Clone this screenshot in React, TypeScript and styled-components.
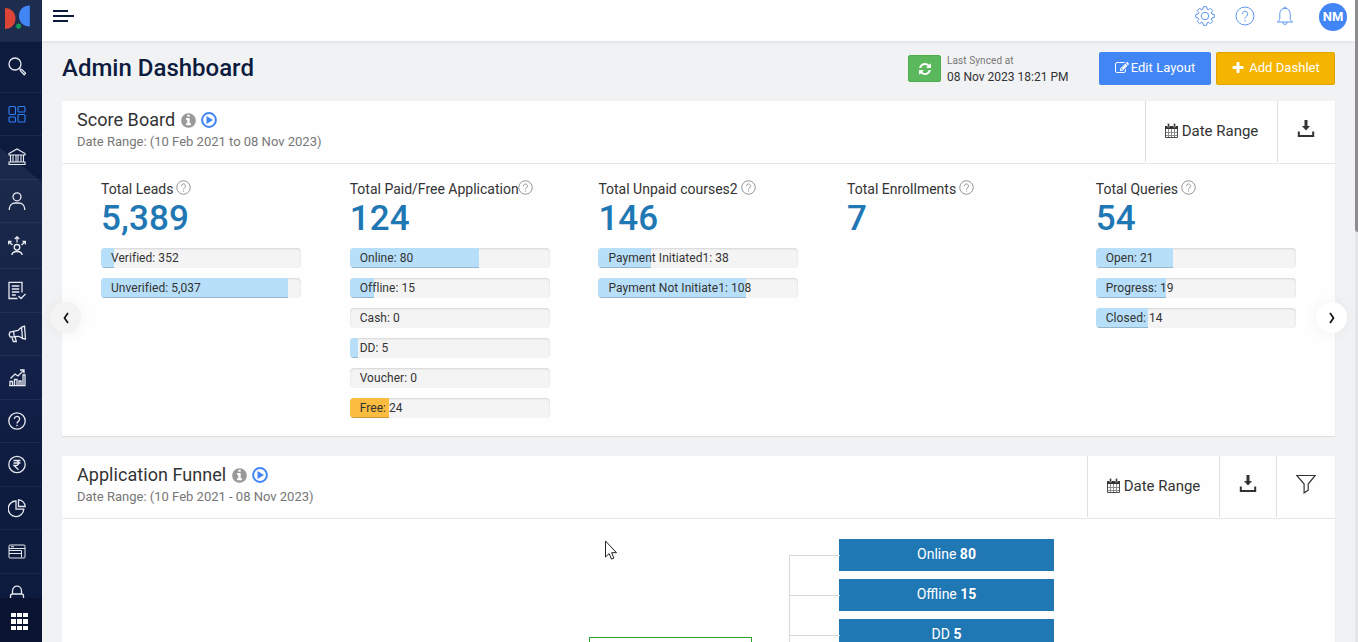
import React from 'react';
import styled, {createGlobalStyle, css} from 'styled-components';

const NAVY = '#0d1b3e';
const BLUE = '#4285f4';
const STEEL = '#1f77b4';
const PAPER = '#f1f2f4';
const INK = '#333';
const LINE = '#e7e7e9';

const GlobalStyle = createGlobalStyle`
  * {
    box-sizing: border-box;
  }

  html,
  body {
    margin: 0;
    overflow: hidden;
    font-family: Roboto, 'Liberation Sans', sans-serif;
    color: ${INK};
    background: ${PAPER};
  }
`;

const Page = styled.div`
  display: flex;
  width: 100%;
  height: 642px;
  overflow: hidden;
`;

const Sidebar = styled.nav`
  display: flex;
  flex-direction: column;
  flex: none;
  width: 42px;
  background:
    linear-gradient(to top right, #1b294a 50%, transparent 51%) 0 148px / 42px 35px no-repeat,
    linear-gradient(#1b294a, #122048 70%, ${NAVY}) 0 183px / 42px 300px no-repeat,
    ${NAVY};
`;

const Logo = styled.div`
  display: flex;
  flex: none;
  align-items: center;
  justify-content: center;
  height: 41px;
  padding: 0 7px 7px 0;
  background: #1e2c4e;
`;

const NavList = styled.div`
  flex: 1;
  min-height: 0;
  overflow: hidden;
`;

const NavItem = styled.div<{$height: number; $active?: boolean}>`
  display: flex;
  align-items: center;
  justify-content: center;
  height: ${(props) => props.$height}px;
  padding-right: 8px;
  color: ${(props) => (props.$active ? '#2f80f5' : '#e8eaf0')};
  border-top: 1px solid rgba(255, 255, 255, 0.06);

  svg {
    display: block;
    fill: none;
    stroke: currentColor;
    stroke-width: 1.3;
  }

  &:first-child {
    padding-bottom: 2px;
  }
`;

const AppsButton = styled.div`
  display: flex;
  flex: none;
  align-items: center;
  justify-content: center;
  height: 44px;
  padding: 3px 3px 0 0;
  background: #0a1430;
`;

const Main = styled.main`
  display: flex;
  flex-direction: column;
  flex: 1;
  min-width: 0;
`;

const TopBar = styled.header`
  display: flex;
  flex: none;
  align-items: center;
  justify-content: space-between;
  height: 41px;
  padding: 0 8px 9px 11px;
  background: #fff;
  box-shadow: 0 1px 4px rgba(0, 0, 0, 0.09);
`;

const TopIcons = styled.div`
  display: flex;
  align-items: center;
  gap: 20px;

  svg {
    display: block;
    fill: none;
    stroke: #5e96f0;
  }
`;

const Avatar = styled.div`
  width: 28px;
  height: 28px;
  margin: 2px 0 0 4px;
  border-radius: 50%;
  color: #fff;
  background: ${BLUE};
  font-size: 13px;
  font-weight: 700;
  line-height: 28px;
  text-align: center;
`;

const Content = styled.div`
  flex: 1;
  min-height: 0;
  padding: 0 20px;
`;

const TitleBar = styled.div`
  display: flex;
  align-items: center;
  height: 60px;
  padding-bottom: 5px;
`;

const PageTitle = styled.h1`
  flex: 1;
  margin: 0 0 2px;
  color: ${NAVY};
  font-size: 24px;
  font-weight: 500;
  line-height: 30px;
`;

const SyncButton = styled.div`
  display: flex;
  align-items: center;
  justify-content: center;
  width: 33px;
  height: 27px;
  border: 1px solid #4cae4c;
  border-radius: 2px;
  color: #fff;
  background: #5cb85c;
`;

const SyncInfo = styled.div`
  width: 158px;
  padding-left: 6px;
  font-size: 12px;
  line-height: 16px;
  white-space: nowrap;

  small {
    display: block;
    color: #777;
    font-size: 10px;
    letter-spacing: 0.1px;
  }
`;

const ActionButton = styled.div<{$tone: 'blue' | 'amber'}>`
  display: flex;
  align-items: center;
  justify-content: center;
  height: 33px;
  padding-bottom: 2px;
  border-radius: 2px;
  color: #fff;
  font-size: 13px;
  letter-spacing: 0.05px;
  white-space: nowrap;

  ${(props) =>
    props.$tone === 'blue'
      ? css`
          gap: 2px;
          width: 112px;
          background: ${BLUE};
        `
      : css`
          gap: 4px;
          width: 119px;
          margin-left: 5px;
          border: 1px solid #e0a300;
          background: #f5b400;
        `};
`;

const Panel = styled.section<{$height: number}>`
  position: relative;
  height: ${(props) => props.$height}px;
  margin-bottom: 20px;
  background: #fefefe;
  box-shadow: 0 1px 1px rgba(0, 0, 0, 0.07);
`;

const PanelHeader = styled.div`
  display: flex;
  height: 63px;
  border-bottom: 1px solid ${LINE};
`;

const PanelHeading = styled.div`
  flex: 1;
  padding: 8px 0 0 15px;
`;

const PanelTitle = styled.h2`
  display: flex;
  align-items: center;
  gap: 5px;
  margin: 0;
  font-size: 18px;
  font-weight: 400;
  line-height: 22px;
  letter-spacing: 0.05px;
`;

const TitleIcons = styled.span`
  display: flex;
  align-items: center;
  gap: 4px;
  color: #999;
`;

const PanelDates = styled.div`
  color: #777;
  font-size: 13px;
  line-height: 22px;
`;

const PanelTool = styled.div<{$width: number; $iconOnly?: boolean}>`
  display: flex;
  align-items: center;
  justify-content: center;
  gap: 3px;
  width: ${(props) => props.$width}px;
  height: 61px;
  padding: ${(props) => (props.$iconOnly ? '0 1px 5px 0' : '0 1px 2px 0')};
  border-left: 1px solid #dfdfe1;
  font-size: 15px;
  white-space: nowrap;
`;

const Scores = styled.div`
  display: grid;
  grid-template-columns: repeat(5, 248.7px);
  padding: 16px 0 0 39px;
`;

const Score = styled.div`
  width: 200px;
`;

const ScoreLabel = styled.div<{$tight?: boolean}>`
  display: flex;
  align-items: center;
  height: 18px;
  font-size: 14px;
  white-space: nowrap;

  svg {
    margin: 0 0 3px ${(props) => (props.$tight ? -1 : 3)}px;
  }
`;

const ScoreTotal = styled.div`
  margin-bottom: 8px;
  color: ${STEEL};
  font-size: 35px;
  font-weight: 500;
  line-height: 42px;
  letter-spacing: 0.1px;
`;

const Track = styled.div`
  position: relative;
  height: 20px;
  margin-bottom: 10px;
  overflow: hidden;
  border-radius: 4px;
  background: #f4f4f4;
  box-shadow: inset 0 1px 2px rgba(0, 0, 0, 0.13);
`;

const Fill = styled.div<{$free?: boolean}>`
  height: 20px;
  background: ${(props) => (props.$free ? '#fbbc3f' : '#b8dff9')};
  box-shadow: inset 0 -1px 0 rgba(0, 0, 0, 0.18);
`;

const TrackText = styled.span`
  position: absolute;
  top: 0;
  left: 10px;
  font-size: 12px;
  line-height: 20px;
  letter-spacing: 0.05px;
  white-space: nowrap;
`;

const Arrow = styled.div<{$side: 'left' | 'right'}>`
  position: absolute;
  top: 201px;
  ${(props) => (props.$side === 'left' ? 'left: -12px' : 'right: -12px')};
  display: flex;
  align-items: center;
  justify-content: center;
  width: 31px;
  height: 31px;
  border-radius: 50%;
  background: ${(props) => (props.$side === 'left' ? '#f3f3f3' : '#fff')};
  box-shadow: 0 0 16px rgba(0, 0, 0, 0.05);
`;

const Canvas = styled.div`
  position: relative;
  height: 125px;
  overflow: hidden;
`;

const FunnelRoot = styled.div`
  position: absolute;
  top: 118px;
  left: 527px;
  width: 163px;
  height: 30px;
  border: 1px solid #2ca02c;
  background: #fff;
`;

const Branches = styled.div`
  position: absolute;
  top: 20px;
  left: 727px;
  width: 265px;
`;

const Branch = styled.div`
  position: relative;
  display: flex;
  align-items: center;
  height: 40px;

  &::before {
    content: '';
    position: absolute;
    top: 16px;
    left: 0;
    width: 50px;
    height: 40px;
    border-top: 1px solid #d8d8d8;
    border-left: 1px solid #d8d8d8;
  }
`;

const BranchBox = styled.div`
  width: 215px;
  height: 32px;
  margin: 0 0 8px 50px;
  color: #fff;
  background: ${STEEL};
  font-size: 14px;
  line-height: 30px;
  text-align: center;
`;

const Scrollbar = styled.div`
  flex: none;
  width: 3px;
  background: #e4e5e7;

  &::before {
    content: '';
    display: block;
    height: 232px;
    border-radius: 0 0 0 3px;
    background: #8d8d8f;
  }
`;

const Pointer = styled.svg`
  position: absolute;
  top: 21px;
  left: 542px;
`;

const Glyph = ({d, size}: {d: string; size: number}): React.JSX.Element => (
  <svg width={size} height={size} viewBox="0 0 1792 1792" fill="currentColor">
    <path d={d} />
  </svg>
);

const REFRESH =
  'M1639 1056q0 5-1 7-64 268-268 434.5t-478 166.5q-146 0-282.5-55t-243.5-157l-129 129q-19 19-45 19t-45-19-19-45v-448q0-26 19-45t45-19h448q26 0 45 19t19 45-19 45l-137 137q71 66 161 102t187 36q134 0 250-65t186-179q11-17 53-117 8-23 30-23h192q13 0 22.5 9.5t9.5 22.5zm25-800v448q0 26-19 45t-45 19h-448q-26 0-45-19t-19-45 19-45l138-138q-148-137-349-137-134 0-250 65t-186 179q-11 17-53 117-8 23-30 23h-199q-13 0-22.5-9.5t-9.5-22.5v-7q65-268 270-434.5t480-166.5q146 0 284 55.5t245 156.5l130-129q19-19 45-19t45 19 19 45z';
const INFO =
  'M1152 1376v-160q0-14-9-23t-23-9h-96v-512q0-14-9-23t-23-9h-320q-14 0-23 9t-9 23v160q0 14 9 23t23 9h96v320h-96q-14 0-23 9t-9 23v160q0 14 9 23t23 9h448q14 0 23-9t9-23zm-128-896v-160q0-14-9-23t-23-9h-192q-14 0-23 9t-9 23v160q0 14 9 23t23 9h192q14 0 23-9t9-23zm640 416q0 209-103 385.5t-279.5 279.5-385.5 103-385.5-103-279.5-279.5-103-385.5 103-385.5 279.5-279.5 385.5-103 385.5 103 279.5 279.5 103 385.5z';
const PLUS =
  'M1600 736v192q0 40-28 68t-68 28h-416v416q0 40-28 68t-68 28h-192q-40 0-68-28t-28-68v-416h-416q-40 0-68-28t-28-68v-192q0-40 28-68t68-28h416v-416q0-40 28-68t68-28h192q40 0 68 28t28 68v416h416q40 0 68 28t28 68z';
const EDIT =
  'M888 1184l116-116-152-152-116 116v56h96v96h56zm440-720q-16-16-33 1l-350 350q-17 17-1 33t33-1l350-350q17-17 1-33zm80 594v190q0 119-84.5 203.5t-203.5 84.5h-832q-119 0-203.5-84.5t-84.5-203.5v-832q0-119 84.5-203.5t203.5-84.5h832q63 0 117 25 15 7 18 23 3 17-9 29l-49 49q-14 14-32 8-23-6-45-6h-832q-66 0-113 47t-47 113v832q0 66 47 113t113 47h832q66 0 113-47t47-113v-126q0-13 9-22l64-64q15-15 35-7t20 29zm-96-738l288 288-672 672h-288v-288zm444 132l-92 92-288-288 92-92q28-28 68-28t68 28l152 152q28 28 28 68t-28 68z';

const HelpIcon = ({size, stroke}: {size: number; stroke?: string}): React.JSX.Element => (
  <svg width={size} height={size} viewBox="0 0 20 20" fill="none" stroke={stroke}>
    <circle cx="10" cy="10" r="9" />
    <path d="M7.3 8a2.7 2.7 0 1 1 4.4 2.1c-1 .8-1.7 1.3-1.7 2.6M10 14.2v1.3" />
  </svg>
);

const PlayIcon = (): React.JSX.Element => (
  <svg width="16" height="16" viewBox="0 0 16 16">
    <circle cx="8" cy="8" r="6.9" fill="none" stroke={BLUE} strokeWidth="2" />
    <path d="M5.5 4v8L12 8z" fill={BLUE} />
  </svg>
);

const CalendarIcon = (): React.JSX.Element => (
  <svg width="15" height="16" viewBox="0 0 15 16">
    <path d="M4.500 6v9M7.500 6v9M10.500 6v9M1 9.500h13M1 12.500h13" fill="none" stroke="#8c8c8c" />
    <path d="M1.500 5v9.500h12V5" fill="none" stroke="#4a4a4a" />
    <path d="M1 3h13v3H1z" fill={INK} />
    <path d="M3.500.500h2v3.500h-2zM9.500.500h2v3.500h-2z" fill={INK} stroke="#fefefe" strokeWidth=".4" />
  </svg>
);

const DownloadIcon = (): React.JSX.Element => (
  <svg width="18" height="18" viewBox="0 0 18 18" fill={INK}>
    <path d="M7.500 0h3v6h2.500L9 10.500 5 6h2.500z" />
    <path d="M1.800 11.500V16h14.400v-4.500" fill="none" stroke={INK} strokeWidth="2" />
  </svg>
);

const FilterIcon = (): React.JSX.Element => (
  <svg width="20" height="20" viewBox="0 0 20 20" fill="none" stroke={INK} strokeWidth="1.200">
    <path d="M.8 1.500h18.400l-7 8.500v6.200l-4.100 2.600V10z" />
  </svg>
);

const Chevron = ({d}: {d: string}): React.JSX.Element => (
  <svg width="8" height="12" viewBox="0 0 8 12" fill="none" stroke="#111" strokeWidth="1.700">
    <path d={d} />
  </svg>
);

interface NavEntry {
  name: string;
  height: number;
  active?: boolean;
  icon: React.ReactNode;
}

const NAV: NavEntry[] = [
  {
    name: 'search',
    height: 51,
    icon: (
      <>
        <circle cx="7" cy="7" r="6" />
        <path d="M11.300 11.300l1.200 1.200M12.300 13.600l1.300-1.300 4 4-1.400 1.400z" />
      </>
    ),
  },
  {
    name: 'dashboard',
    height: 43,
    active: true,
    icon: (
      <g strokeWidth="1.1">
        <rect x="1" y="1.500" width="6.500" height="8" rx="1" />
        <rect x="10" y="1.500" width="7" height="5.500" rx="1" />
        <rect x="1" y="12" width="6.500" height="5" rx="1" />
        <rect x="10" y="9.500" width="7" height="7.500" rx="1" />
      </g>
    ),
  },
  {
    name: 'institute',
    height: 44,
    icon: (
      <path
        d="M1 5.500L9 1l8 4.500V7H1zM2.500 7v7M5 7v7M8 7v7M10 7v7M13 7v7M15.500 7v7M1 14h16v2.500H1z"
        strokeWidth="1.1"
      />
    ),
  },
  {
    name: 'leads',
    height: 43,
    icon: <path d="M9 .8a4 4 0 1 1 0 8 4 4 0 0 1 0-8zM1.300 18v-1c0-3.600 2.700-6 6-6h3.400c3.300 0 6 2.400 6 6v1" />,
  },
  {
    name: 'assign',
    height: 46,
    icon: (
      <path d="M9 8.500a2.800 2.800 0 1 1 0 5.600A2.800 2.800 0 0 1 9 8.500zM3.700 19.500c.3-2.800 2-4 5.300-4s5 1.200 5.300 4M9 6.500V1M6.700 3L9 .8 11.300 3M4.500 9L.6 5.500M.6 8.500v-3h3M13.500 9l3.900-3.500M17.400 8.500v-3h-3" />
    ),
  },
  {
    name: 'applications',
    height: 44,
    icon: <path d="M14 11.500V1.300H1v16.200h8.500M3.800 5h7.500M3.800 8h7.500M3.800 11h7.500M3.800 14h4M10.500 15l2.500 2.500 4.500-4.500" />,
  },
  {
    name: 'marketing',
    height: 43,
    icon: <path d="M13.500 2.200l3-1 1 13-3-.8zM13.500 2.200L10 5.500 2 7l-.9 2.500L2.200 12l8.500-.7 3.800 2.100M5.500 6.500l.8 5M3.800 12l1.500 4.500h3l-1.200-4.500" />,
  },
  {
    name: 'reports',
    height: 44,
    icon: <path d="M1 17.700h16.500M2 17.500v-4h2.500v4M6.500 17.500v-6H9v6M11 17.500V13h2v4.500M15 17.500V7h2v10.500M2.500 10.500L7 6l3 2 5.500-5.500M12 2h4v3.500" />,
  },
  {
    name: 'help',
    height: 43,
    icon: <path d="M9 .8a8.200 8.200 0 1 1 0 16.400A8.200 8.200 0 0 1 9 .8zM6.400 7a2.600 2.600 0 1 1 4.200 2C9.600 9.800 9 10.200 9 11.500M9 12.800v1.400" />,
  },
  {
    name: 'payments',
    height: 44,
    icon: <path d="M9 1.300a8.200 8.200 0 1 1 0 16.400A8.200 8.200 0 0 1 9 1.300zM5.500 5.500h7M5.500 8h7M5.500 5.500H8c3.300 0 3.300 5 0 5H6l4.500 4.200" />,
  },
  {
    name: 'analytics',
    height: 43,
    icon: <path d="M8 2a7.800 7.800 0 1 0 7.800 8.200H8zM10.500.8v6.700h6.700A7 7 0 0 0 10.500.8z" />,
  },
  {
    name: 'pages',
    height: 44,
    icon: (
      <path
        d="M2 3h14q1 0 1 1v11q0 1-1 1H2q-1 0-1-1V4q0-1 1-1zM1 6.500h16M3 4.800h3M13.500 8.500v7M1 11.500h12.500M1 8.500h12.500"
        strokeWidth="1"
      />
    ),
  },
  {
    name: 'security',
    height: 40,
    icon: <path d="M4.500 10V7c0-6.500 9-6.500 9 0v3M2.500 17.500V12c0-1.200.8-2 2-2h9c1.200 0 2 .8 2 2v5.500z" />,
  },
];

interface Bar {
  text: string;
  width: number;
  free?: boolean;
}

interface ScoreData {
  label: string;
  total: string;
  tight?: boolean;
  bars: Bar[];
}

const SCORES: ScoreData[] = [
  {
    label: 'Total Leads',
    total: '5,389',
    bars: [
      {text: 'Verified: 352', width: 6.5},
      {text: 'Unverified: 5,037', width: 93.5},
    ],
  },
  {
    label: 'Total Paid/Free Application',
    total: '124',
    tight: true,
    bars: [
      {text: 'Online: 80', width: 64.5},
      {text: 'Offline: 15', width: 12},
      {text: 'Cash: 0', width: 0},
      {text: 'DD: 5', width: 4},
      {text: 'Voucher: 0', width: 0},
      {text: 'Free: 24', width: 19.5, free: true},
    ],
  },
  {
    label: 'Total Unpaid courses2',
    total: '146',
    bars: [
      {text: 'Payment Initiated1: 38', width: 26.5},
      {text: 'Payment Not Initiate1: 108', width: 74},
    ],
  },
  {label: 'Total Enrollments', total: '7', bars: []},
  {
    label: 'Total Queries',
    total: '54',
    bars: [
      {text: 'Open: 21', width: 38.5},
      {text: 'Progress: 19', width: 35},
      {text: 'Closed: 14', width: 26},
    ],
  },
];

const FUNNEL = [
  {name: 'Online', count: 80},
  {name: 'Offline', count: 15},
  {name: 'DD', count: 5},
];

const Heading = ({title, range}: {title: string; range: string}): React.JSX.Element => (
  <PanelHeading>
    <PanelTitle>
      {title}
      <TitleIcons>
        <Glyph d={INFO} size={17} />
        <PlayIcon />
      </TitleIcons>
    </PanelTitle>
    <PanelDates>Date Range: {range}</PanelDates>
  </PanelHeading>
);

const App = (): React.JSX.Element => (
  <>
    <GlobalStyle />
    <Page>
      <Sidebar>
        <Logo>
          <svg width="27" height="24" viewBox="0 0 27 24">
            <path d="M1 3c6 0 10.500 4.500 10.500 10.500S7 24 1 24z" fill="#dc4437" />
            <path d="M25.800.5v21C19 21.500 15 17 15 11S19 .5 25.800.5z" fill={BLUE} />
            <path d="M14 17.800l1.200 1.200 1.700-.3-.3 1.600 1 1-1.300 1-.2 1.500-1.500-.4-1.400.6-.5-1.600-1.400-1 1.200-1-.1-1.500 1.300.2z" fill="#149b57" />
          </svg>
        </Logo>
        <NavList>
          {NAV.map((item) => (
            <NavItem key={item.name} $height={item.height} $active={item.active}>
              <svg width="18" height="19" viewBox="0 0 18 19">
                {item.icon}
              </svg>
            </NavItem>
          ))}
        </NavList>
        <AppsButton>
          <svg width="17" height="17" viewBox="0 0 17 17" fill="#fff">
            <path d="M0 0h5v4H0zM6 0h5v4H6zM12 0h5v4h-5zM0 6h5v5H0zM6 6h5v5H6zM12 6h5v5h-5zM0 13h5v4H0zM6 13h5v4H6zM12 13h5v4h-5z" />
          </svg>
        </AppsButton>
      </Sidebar>
      <Main>
        <TopBar>
          <svg width="21" height="12" viewBox="0 0 21 12" stroke={NAVY} strokeWidth="2">
            <path d="M0 1h15M0 6h21M0 11h15" />
          </svg>
          <TopIcons>
            <svg width="20" height="20" viewBox="0 0 20 20">
              <circle cx="10" cy="10" r="3.700" />
              <path d="M8.500.7h3l.5 2.400 1.500.6 2-1.400 2.200 2.200-1.400 2 .6 1.500 2.400.5v3l-2.400.5-.6 1.500 1.400 2-2.200 2.200-2-1.400-1.500.6-.5 2.400h-3L8 16.900l-1.500-.6-2 1.400-2.200-2.200 1.400-2-.6-1.500-2.400-.5v-3L3.100 8l.6-1.500-1.400-2 2.200-2.200 2 1.400L8 3.100z" />
            </svg>
            <HelpIcon size={20} />
            <svg width="20" height="20" viewBox="0 0 20 20">
              <path d="M10 2.300c-3.300 0-5.200 2.500-5.200 5.500v4.500c0 1.500-.8 2.700-2.500 3.700h15.400c-1.700-1-2.500-2.200-2.500-3.700V7.800c0-3-1.900-5.500-5.200-5.500zM8.800 2.300a1.200 1.200 0 1 1 2.400 0M7.800 16.200a2.200 2.200 0 0 0 4.400 0" />
            </svg>
            <Avatar>NM</Avatar>
          </TopIcons>
        </TopBar>
        <Content>
          <TitleBar>
            <PageTitle>Admin Dashboard</PageTitle>
            <SyncButton>
              <Glyph d={REFRESH} size={14} />
            </SyncButton>
            <SyncInfo>
              <small>Last Synced at</small>
              08 Nov 2023 18:21 PM
            </SyncInfo>
            <ActionButton $tone="blue">
              <Glyph d={EDIT} size={14} />
              Edit Layout
            </ActionButton>
            <ActionButton $tone="amber">
              <Glyph d={PLUS} size={14} />
              Add Dashlet
            </ActionButton>
          </TitleBar>
          <Panel $height={335}>
            <PanelHeader>
              <Heading title="Score Board" range="(10 Feb 2021 to 08 Nov 2023)" />
              <PanelTool $width={132}>
                <CalendarIcon />
                Date Range
              </PanelTool>
              <PanelTool $width={58} $iconOnly>
                <DownloadIcon />
              </PanelTool>
            </PanelHeader>
            <Scores>
              {SCORES.map((score) => (
                <Score key={score.label}>
                  <ScoreLabel $tight={score.tight}>
                    {score.label}
                    <HelpIcon size={15} stroke="#777" />
                  </ScoreLabel>
                  <ScoreTotal>{score.total}</ScoreTotal>
                  {score.bars.map((bar) => (
                    <Track key={bar.text}>
                      <Fill $free={bar.free} style={{width: `${bar.width}%`}} />
                      <TrackText>{bar.text}</TrackText>
                    </Track>
                  ))}
                </Score>
              ))}
            </Scores>
            <Arrow $side="left">
              <Chevron d="M6 1L2.500 6 6 11" />
            </Arrow>
            <Arrow $side="right">
              <Chevron d="M2 1l3.500 5L2 11" />
            </Arrow>
          </Panel>
          <Panel $height={220}>
            <PanelHeader>
              <Heading title="Application Funnel" range="(10 Feb 2021 - 08 Nov 2023)" />
              <PanelTool $width={132}>
                <CalendarIcon />
                Date Range
              </PanelTool>
              <PanelTool $width={57} $iconOnly>
                <DownloadIcon />
              </PanelTool>
              <PanelTool $width={59} $iconOnly>
                <FilterIcon />
              </PanelTool>
            </PanelHeader>
            <Canvas>
              <FunnelRoot />
              <Branches>
                {FUNNEL.map((step) => (
                  <Branch key={step.name}>
                    <BranchBox>
                      {step.name} <b>{step.count}</b>
                    </BranchBox>
                  </Branch>
                ))}
              </Branches>
              <Pointer width="14" height="20" viewBox="0 0 14 20" fill="#fff" stroke="#222">
                <path d="M1.500 1v16l3.600-3.400 2.400 5.500 2.400-1-2.300-5.400h4.900z" />
              </Pointer>
            </Canvas>
          </Panel>
        </Content>
      </Main>
      <Scrollbar />
    </Page>
  </>
);

export default App;
